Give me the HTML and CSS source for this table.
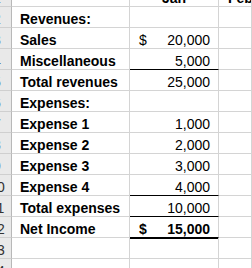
FILE: index.html
```html
<!DOCTYPE html>
<html>
<head>
<meta charset="utf-8">
<link rel="stylesheet" href="styles.css">
</head>
<body>
<div class="sheet">
  <div class="rh"><span>1</span></div><div class="c a"></div><div class="c b head"><span class="hd">Jan</span></div><div class="c x"><span class="hd">Feb</span></div>
  <div class="rh"><span>2</span></div><div class="c a">Revenues:</div><div class="c b"></div><div class="c x"></div>
  <div class="rh"><span>3</span></div><div class="c a">Sales</div><div class="c b"><span>$</span><span>20,000</span></div><div class="c x"></div>
  <div class="rh"><span>4</span></div><div class="c a">Miscellaneous</div><div class="c b line"><span></span><span>5,000</span></div><div class="c x"></div>
  <div class="rh"><span>5</span></div><div class="c a">Total revenues</div><div class="c b"><span></span><span>25,000</span></div><div class="c x"></div>
  <div class="rh"><span>6</span></div><div class="c a">Expenses:</div><div class="c b"></div><div class="c x"></div>
  <div class="rh"><span>7</span></div><div class="c a">Expense 1</div><div class="c b"><span></span><span>1,000</span></div><div class="c x"></div>
  <div class="rh"><span>8</span></div><div class="c a">Expense 2</div><div class="c b"><span></span><span>2,000</span></div><div class="c x"></div>
  <div class="rh"><span>9</span></div><div class="c a">Expense 3</div><div class="c b"><span></span><span>3,000</span></div><div class="c x"></div>
  <div class="rh"><span>10</span></div><div class="c a">Expense 4</div><div class="c b line"><span></span><span>4,000</span></div><div class="c x"></div>
  <div class="rh"><span>11</span></div><div class="c a">Total expenses</div><div class="c b line"><span></span><span>10,000</span></div><div class="c x"></div>
  <div class="rh"><span>12</span></div><div class="c a">Net Income</div><div class="c b thick strong"><span>$</span><span>15,000</span></div><div class="c x"></div>
  <div class="rh"><span>13</span></div><div class="c a"></div><div class="c b"></div><div class="c x"></div>
  <div class="rh"><span>14</span></div><div class="c a"></div><div class="c b"></div><div class="c x"></div>
</div>
</body>
</html>
```
FILE: styles.css
```css
html, body {
  margin: 0;
  padding: 0;
  background: #ffffff;
  overflow: hidden;
}

.sheet {
  width: 252px;
  height: 268px;
  overflow: hidden;
  display: grid;
  grid-template-columns: 12px 118px 89px 1fr;
  grid-template-rows: 7px repeat(13, 21px);
  font-family: "Liberation Sans", Arial, sans-serif;
  font-size: 14px;
  line-height: 16px;
  color: #000;
}

.rh, .c {
  box-sizing: border-box;
  display: flex;
  align-items: flex-end;
  overflow: hidden;
  border-bottom: 1px solid #d4d4d4;
  border-right: 1px solid #d4d4d4;
}

.rh {
  background: #e9e9e9;
  border-right-color: #b8b8b8;
  border-bottom-color: #cfcfcf;
  color: #333;
}

.rh span {
  flex: none;
  width: 30px;
  margin-left: -18px;
  text-align: center;
}

.a {
  padding-left: 8px;
  font-weight: bold;
  white-space: nowrap;
}

.b {
  justify-content: space-between;
  padding-left: 9px;
  padding-right: 8px;
}

.b.head {
  justify-content: center;
  padding-left: 0;
  padding-right: 0;
}

.hd {
  flex: none;
  font-weight: bold;
}

.x {
  padding-left: 9px;
}

.line {
  border-bottom-color: #000;
}

.thick {
  border-bottom-color: #000;
  box-shadow: 0 1px 0 #000;
  overflow: visible;
}

.strong {
  font-weight: bold;
}
```
